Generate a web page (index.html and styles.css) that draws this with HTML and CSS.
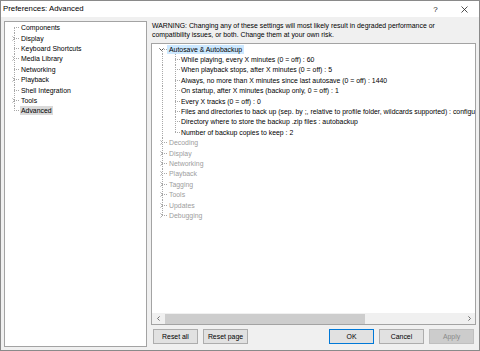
FILE: index.html
```html
<!DOCTYPE html>
<html lang="en">
<head>
  <meta charset="UTF-8" />
  <title>Preferences: Advanced</title>
  <link rel="stylesheet" href="styles.css">
</head>
<body>
  <div class="window">
    <!-- Title bar -->
    <div class="titlebar">
      <span class="title">Preferences: Advanced</span>
      <div class="caption">
        <span class="cap-btn help">?</span>
        <span class="cap-btn">
          <svg width="7" height="7" viewBox="0 0 7 7"><path d="M0.5 0.5 L6.5 6.5 M6.5 0.5 L0.5 6.5" stroke="#222" stroke-width="0.8" fill="none"/></svg>
        </span>
      </div>
    </div>

    <div class="content">
      <!-- Left: page tree -->
      <div class="nav">
        <div class="row first"><span class="gutter"></span><span class="label">Components</span></div>
        <div class="row"><span class="gutter"><svg class="chev" width="3" height="5" viewBox="0 0 3 5"><path d="M0.4 0.4 L2.5 2.5 L0.4 4.6" /></svg></span><span class="label">Display</span></div>
        <div class="row"><span class="gutter"></span><span class="label">Keyboard Shortcuts</span></div>
        <div class="row"><span class="gutter"><svg class="chev" width="3" height="5" viewBox="0 0 3 5"><path d="M0.4 0.4 L2.5 2.5 L0.4 4.6" /></svg></span><span class="label">Media Library</span></div>
        <div class="row"><span class="gutter"></span><span class="label">Networking</span></div>
        <div class="row"><span class="gutter"><svg class="chev" width="3" height="5" viewBox="0 0 3 5"><path d="M0.4 0.4 L2.5 2.5 L0.4 4.6" /></svg></span><span class="label">Playback</span></div>
        <div class="row"><span class="gutter"></span><span class="label">Shell Integration</span></div>
        <div class="row"><span class="gutter"><svg class="chev" width="3" height="5" viewBox="0 0 3 5"><path d="M0.4 0.4 L2.5 2.5 L0.4 4.6" /></svg></span><span class="label">Tools</span></div>
        <div class="row last"><span class="gutter"></span><span class="label selected">Advanced</span></div>
      </div>

      <!-- Right: advanced settings -->
      <div class="main">
        <p class="warning">WARNING: Changing any of these settings will most likely result in degraded performance or compatibility issues, or both. Change them at your own risk.</p>

        <div class="adv-box">
          <div class="adv-tree">
            <div class="row root first"><span class="gutter"><svg class="chev open" width="5" height="3" viewBox="0 0 5 3"><path d="M0.4 0.4 L2.5 2.5 L4.6 0.4" /></svg></span><span class="label focused">Autosave &amp; Autobackup</span></div>
            <div class="row child"><span class="label">While playing, every X minutes (0 = off) : 60</span></div>
            <div class="row child"><span class="label">When playback stops, after X minutes (0 = off) : 5</span></div>
            <div class="row child"><span class="label">Always, no more than X minutes since last autosave (0 = off) : 1440</span></div>
            <div class="row child"><span class="label">On startup, after X minutes (backup only, 0 = off) : 1</span></div>
            <div class="row child"><span class="label">Every X tracks (0 = off) : 0</span></div>
            <div class="row child"><span class="label">Files and directories to back up (sep. by ;, relative to profile folder, wildcards supported) : configuration;playlists-v2.0</span></div>
            <div class="row child"><span class="label">Directory where to store the backup .zip files : autobackup</span></div>
            <div class="row child last-child"><span class="label">Number of backup copies to keep : 2</span></div>
            <div class="row root dim"><span class="gutter"><svg class="chev" width="3" height="5" viewBox="0 0 3 5"><path d="M0.4 0.4 L2.5 2.5 L0.4 4.6" /></svg></span><span class="label">Decoding</span></div>
            <div class="row root dim"><span class="gutter"><svg class="chev" width="3" height="5" viewBox="0 0 3 5"><path d="M0.4 0.4 L2.5 2.5 L0.4 4.6" /></svg></span><span class="label">Display</span></div>
            <div class="row root dim"><span class="gutter"><svg class="chev" width="3" height="5" viewBox="0 0 3 5"><path d="M0.4 0.4 L2.5 2.5 L0.4 4.6" /></svg></span><span class="label">Networking</span></div>
            <div class="row root dim"><span class="gutter"><svg class="chev" width="3" height="5" viewBox="0 0 3 5"><path d="M0.4 0.4 L2.5 2.5 L0.4 4.6" /></svg></span><span class="label">Playback</span></div>
            <div class="row root dim"><span class="gutter"><svg class="chev" width="3" height="5" viewBox="0 0 3 5"><path d="M0.4 0.4 L2.5 2.5 L0.4 4.6" /></svg></span><span class="label">Tagging</span></div>
            <div class="row root dim"><span class="gutter"><svg class="chev" width="3" height="5" viewBox="0 0 3 5"><path d="M0.4 0.4 L2.5 2.5 L0.4 4.6" /></svg></span><span class="label">Tools</span></div>
            <div class="row root dim"><span class="gutter"><svg class="chev" width="3" height="5" viewBox="0 0 3 5"><path d="M0.4 0.4 L2.5 2.5 L0.4 4.6" /></svg></span><span class="label">Updates</span></div>
            <div class="row root dim last"><span class="gutter"><svg class="chev" width="3" height="5" viewBox="0 0 3 5"><path d="M0.4 0.4 L2.5 2.5 L0.4 4.6" /></svg></span><span class="label">Debugging</span></div>
          </div>

          <div class="hscroll">
            <span class="arrow"><svg width="3" height="5" viewBox="0 0 3 5"><path d="M2.6 0.4 L0.5 2.5 L2.6 4.6" /></svg></span>
            <span class="track"><span class="thumb"></span></span>
            <span class="arrow"><svg width="3" height="5" viewBox="0 0 3 5"><path d="M0.4 0.4 L2.5 2.5 L0.4 4.6" /></svg></span>
          </div>
        </div>

        <div class="buttons">
          <button class="btn">Reset all</button>
          <button class="btn">Reset page</button>
          <span class="spacer"></span>
          <button class="btn default">OK</button>
          <button class="btn">Cancel</button>
          <button class="btn" disabled>Apply</button>
        </div>
      </div>
    </div>
  </div>
</body>
</html>
```

FILE: styles.css
```css
* {
  box-sizing: border-box;
}

body {
  margin: 0;
  font-family: 'Liberation Sans', Arial, sans-serif;
  font-size: 6.9px;
  color: #000;
  background: #fff;
}

.window {
  width: 480px;
  height: 351px;
  border: 1px solid #8a8a8a;
  background: #f0f0f0;
  display: flex;
  flex-direction: column;
}

.titlebar {
  height: 16px;
  flex: none;
  background: #fff;
  display: flex;
  align-items: center;
  justify-content: space-between;
}

.title {
  padding-left: 2px;
  font-size: 7.8px;
  margin-top: -1px;
}

.caption {
  display: flex;
  height: 100%;
}

.cap-btn {
  width: 29px;
  display: flex;
  align-items: center;
  justify-content: center;
  padding-top: 1px;
}

.help {
  font-size: 8px;
  color: #222;
}

.content {
  flex: 1;
  min-height: 0;
  display: flex;
  gap: 4px;
  padding: 4px 3px 3px 3px;
}

/* tree rows, shared */
.row {
  --line: #a8a8a8;
  --v: repeating-linear-gradient(to bottom, var(--line) 0 1px, transparent 1px 2px);
  --h: repeating-linear-gradient(to right, var(--line) 0 1px, transparent 1px 2px);
  height: 10.4px;
  display: flex;
  align-items: center;
  white-space: nowrap;
  background-repeat: no-repeat;
}

.gutter {
  flex: none;
  display: flex;
  align-items: center;
}

.label {
  height: 9px;
  line-height: 9px;
  padding: 0 1px;
}

.chev {
  fill: none;
  stroke: #a6a6a6;
  stroke-width: 0.9;
}

/* left page tree */
.nav {
  width: 143px;
  flex: none;
  background: #fff;
  border: 1px solid #a3a3a3;
  padding-top: 0.5px;
}

.nav .row {
  background-image: var(--v), var(--h);
  background-size: 1px 100%, 6px 1px;
  background-position: 9px 0, 9px 50%;
}

.nav .row.first {
  background-size: 1px 50%, 6px 1px;
  background-position: 9px 100%, 9px 50%;
}

.nav .row.last {
  background-size: 1px 50%, 6px 1px;
  background-position: 9px 0, 9px 50%;
}

.nav .gutter {
  width: 15px;
  padding-left: 7px;
}

.selected {
  background: #d9d9d9;
}

/* right side */
.main {
  flex: 1;
  min-width: 0;
  display: flex;
  flex-direction: column;
}

.warning {
  margin: 0;
  height: 18px;
  max-width: 296px;
  line-height: 9px;
  padding-left: 1px;
}

.adv-box {
  margin-top: 4px;
  height: 282px;
  flex: none;
  background: #fff;
  border: 1px solid #a3a3a3;
  display: flex;
  flex-direction: column;
}

.adv-tree {
  flex: 1;
  overflow: hidden;
}

.adv-tree .row {
  background-image: var(--v), var(--h);
  background-size: 1px 100%, 5px 1px;
  background-position: 10px 0, 10px 50%;
}

.adv-tree .row.first {
  background-size: 1px 50%, 5px 1px;
  background-position: 10px 100%, 10px 50%;
}

.adv-tree .row.last {
  background-size: 1px 50%, 5px 1px;
  background-position: 10px 0, 10px 50%;
}

.adv-tree .root .gutter {
  width: 15px;
  padding-left: 8px;
}

.adv-tree .root .label {
  padding: 0 2px;
}

.adv-tree .child {
  padding-left: 28px;
  background-image: var(--v), var(--v), var(--h);
  background-size: 1px 100%, 1px 100%, 5px 1px;
  background-position: 10px 0, 23px 0, 23px 50%;
}

.adv-tree .child.last-child {
  background-size: 1px 100%, 1px 50%, 5px 1px;
}

.chev.open {
  stroke: #404040;
}

.adv-tree .root .chev.open {
  margin-left: -1px;
}

.focused {
  background: #cce8ff;
}

.dim {
  color: #9d9d9d;
}

.hscroll {
  height: 11px;
  flex: none;
  background: #f0f0f0;
  display: flex;
  align-items: stretch;
}

.hscroll .arrow {
  width: 12px;
  flex: none;
  display: flex;
  align-items: center;
  justify-content: center;
}

.hscroll .arrow svg {
  fill: none;
  stroke: #606060;
  stroke-width: 0.9;
}

.track {
  flex: 1;
  display: flex;
  padding: 0.5px 0 0.5px 1px;
}

.thumb {
  width: 200px;
  background: #cdcdcd;
}

.buttons {
  margin-top: 4px;
  display: flex;
  gap: 5px;
  padding: 0 2px;
}

.spacer {
  flex: 1;
}

.btn {
  width: 45px;
  height: 15px;
  padding: 0;
  font: inherit;
  color: #000;
  background: #e1e1e1;
  border: 1px solid #adadad;
}

.btn.default {
  border-color: #0078d7;
}

.btn:disabled {
  background: #cccccc;
  border-color: #bfbfbf;
  color: #8a8a8a;
}
```
